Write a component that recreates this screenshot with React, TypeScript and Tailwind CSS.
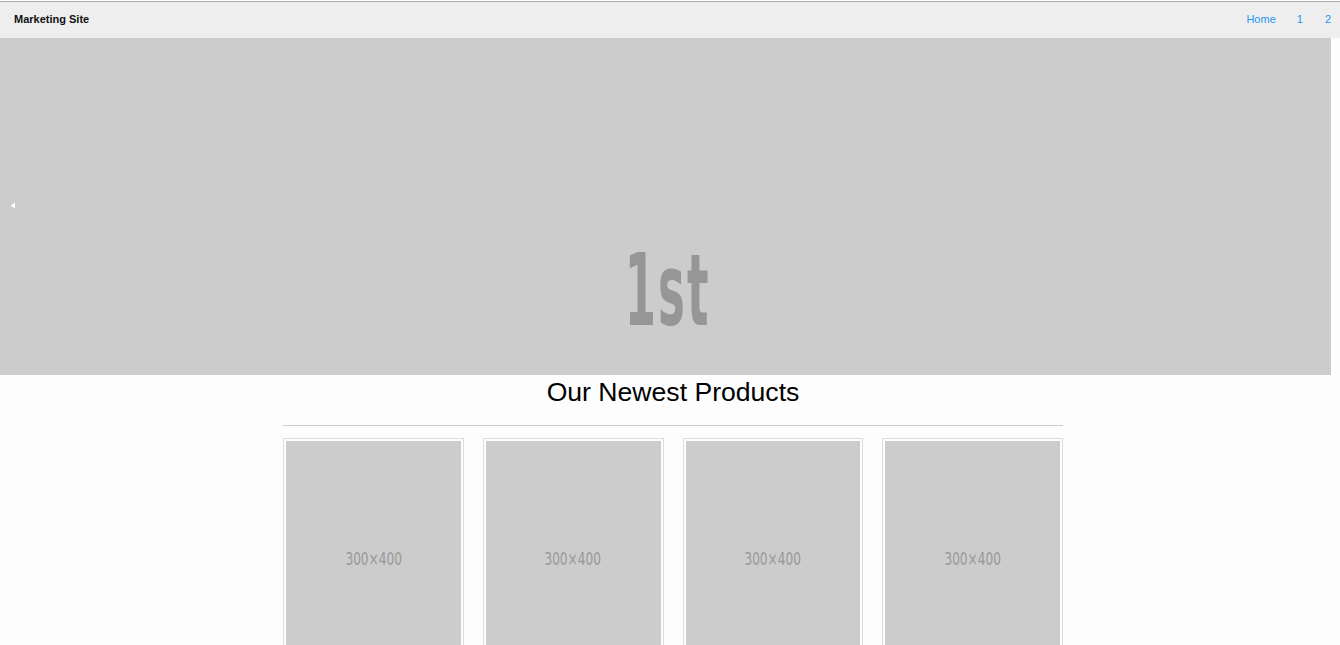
import React from 'react';

const products = [1, 2, 3, 4];

function App() {
  return (
    <div className="min-h-screen bg-[#fdfdfd] pt-px font-['Liberation_Sans',Arial,sans-serif] text-black">
      {/* Top bar */}
      <header className="flex h-[37px] items-center justify-between border-t border-[#a9a9a9] bg-[#eeeeee] pb-[2px] pl-[14px] pr-[9px] text-[11px]">
        <span className="font-bold text-[#111]">Marketing Site</span>
        <nav className="flex items-center text-[#2196f3]">
          <a className="mr-[21px]">Home</a>
          <a className="mr-[22px]">1</a>
          <a>2</a>
        </nav>
      </header>

      {/* Carousel */}
      <section className="relative flex h-[337px] w-[1331px] flex-col items-center justify-end bg-[#cccccc] pb-[34px]">
        <svg className="absolute left-[10px] top-[164px]" width="6" height="7" viewBox="0 0 6 7">
          <path d="M5 0.5 L0.5 3.5 L5 6.5 Z" fill="#ffffff" />
        </svg>
        <span className="ml-[4px] inline-block origin-center scale-x-[0.5] font-['DejaVu_Sans_Condensed','DejaVu_Sans',sans-serif] text-[100px] font-bold leading-none tracking-[4px] text-[#969696]">
          1st
        </span>
      </section>

      {/* Products */}
      <section className="ml-[283px] w-[780px]">
        <h2 className="pt-[2px] text-center text-[26.6px] leading-[30px]">Our Newest Products</h2>
        <hr className="mt-[18px] border-t border-[#cccccc]" />
        <div className="mt-[12px] grid grid-cols-4 gap-[19px]">
          {products.map((p) => (
            <div key={p} className="border border-[#dddddd] p-[2px]">
              <div className="flex h-[235px] items-center justify-center bg-[#cccccc]">
                <span className="inline-block scale-x-[0.75] font-['DejaVu_Sans_Condensed','DejaVu_Sans',sans-serif] text-[18px] text-[#999999]">
                  300×400
                </span>
              </div>
            </div>
          ))}
        </div>
      </section>
    </div>
  );
}

export default App;
